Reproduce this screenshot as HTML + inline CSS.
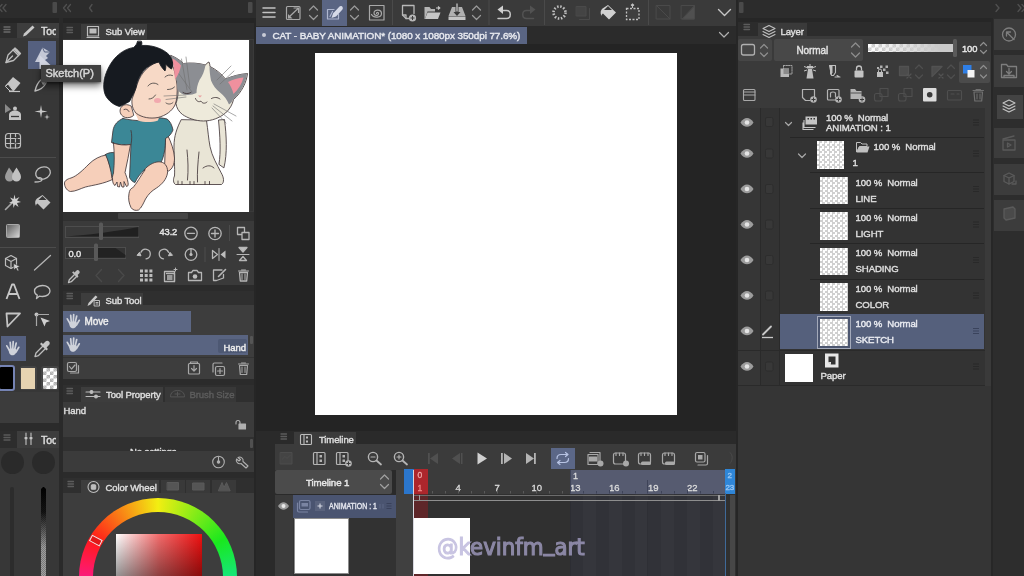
<!DOCTYPE html>
<html lang="en"><head><meta charset="utf-8"><title>CAT - BABY ANIMATION</title>
<style>
html,body{margin:0;padding:0}
body{width:1024px;height:576px;overflow:hidden;background:#2b2b2b;font-family:"Liberation Sans",sans-serif;color:#dcdcdc}
#app{filter:blur(.6px);position:relative;width:1024px;height:576px;overflow:hidden;background:#2b2b2b}
#app div,#app svg,#app span{position:absolute;box-sizing:border-box}
.t{white-space:nowrap;line-height:1;font-weight:normal;color:#dedede;font-size:9.5px;-webkit-text-stroke:.42px currentColor;letter-spacing:-.1px}
svg{overflow:visible}
.ic{fill:none;stroke:#bdbdbd;stroke-width:1.3;stroke-linecap:round;stroke-linejoin:round}
.fl{fill:#bdbdbd;stroke:none}
.dim{opacity:.35}
.chk{background-color:#fff;background-image:linear-gradient(45deg,#cdcdcd 25%,transparent 25%,transparent 75%,#cdcdcd 75%),linear-gradient(45deg,#cdcdcd 25%,transparent 25%,transparent 75%,#cdcdcd 75%);background-size:6px 6px;background-position:0 0,3px 3px}
.rn{font-size:9.5px;color:#dcdcdc;-webkit-text-stroke:.3px currentColor}
.chk2{background:conic-gradient(#d0d0d0 25%,#fff 0 50%,#d0d0d0 0 75%,#fff 0) 0 0/5px 5px}
</style></head><body>
<div id="app">
<!-- topbar -->
<div style="left:0;top:0;width:256px;height:18px;background:#2c2c2c"></div>
<div style="left:0;top:17.500px;width:256px;height:5.500px;background:#252525"></div>
<div style="left:737px;top:0;width:287px;height:17.500px;background:#2c2c2c"></div>
<div style="left:737px;top:17.500px;width:287px;height:5px;background:#262626"></div>
<svg style="left:0;top:0" width="1024" height="18" viewBox="0 0 1024 18">
<g fill="none" stroke="#505050" stroke-width="1.3" stroke-linecap="round" stroke-linejoin="round">
<path d="M2 4.5 -1 8 2 11.5M6 4.5 3 8 6 11.5"/>
<path d="M66.5 4.5 63.5 8 66.5 11.5M70.5 4.5 67.5 8 70.5 11.5"/>
<path d="M92 4.5 89.5 8 92 11.5"/>
<path d="M996 4.5 999 8 996 11.5"/>
<path d="M1018 4.5 1021 8 1018 11.5M1022 4.5 1025 8 1022 11.5"/>
</g>
<rect x="52.5" y="2" width="4.5" height="11" rx="1" fill="#4a4a4a"/>
<rect x="248" y="2" width="4.5" height="11" rx="1" fill="#4a4a4a"/>
<rect x="739" y="2" width="4.5" height="11" rx="1" fill="#4a4a4a"/>
</svg>

<!-- tools -->
<div style="left:0;top:23px;width:59px;height:400px;background:#373737"></div>
<div style="left:0;top:23px;width:17px;height:15px;background:#2d2d2d"></div>
<div style="left:17px;top:23px;width:42px;height:15px;background:#3d3d3d"></div>
<div style="left:0;top:392px;width:59px;height:31px;background:#3c3c3c"></div>
<div style="left:59px;top:18px;width:3.5px;height:558px;background:#2a2a2a"></div>
<div class="t" style="left:41px;top:26px;font-size:10.5px;width:15px;overflow:hidden">Tool</div>
<div style="left:28px;top:41px;width:28px;height:28px;background:#55607f"></div>
<div style="left:1px;top:336px;width:25px;height:24.5px;background:#55607f"></div>
<div style="left:0;top:157px;width:56px;height:1px;background:#4c4c4c"></div>
<div style="left:0;top:246.5px;width:56px;height:1px;background:#4c4c4c"></div>
<!-- swatches -->
<div style="left:-2px;top:365px;width:17px;height:26px;background:#000;border:2px solid #7583b3;border-radius:3px"></div>
<div style="left:19.5px;top:366px;width:17px;height:24px;background:#444;border-radius:3px"></div>
<div style="left:21px;top:368px;width:14px;height:20.5px;background:#e6d3b1"></div>
<div style="left:41px;top:366px;width:18px;height:24px;background:#444;border-radius:3px"></div>
<div style="left:43px;top:368px;width:14px;height:21px;background-color:#fff;background-image:linear-gradient(45deg,#b4b4b4 25%,transparent 25%,transparent 75%,#b4b4b4 75%),linear-gradient(45deg,#b4b4b4 25%,transparent 25%,transparent 75%,#b4b4b4 75%);background-size:7px 7px;background-position:0 0,3.500px 3.500px;border-radius:1px"></div>
<svg style="left:0;top:0" width="60" height="440" viewBox="0 0 60 440">
<g class="ic" style="stroke:#6a6a6a"><path d="M4 27h6M4 29.5h6M4 32h6"/></g>
<!-- pencil tab icon -->
<path d="M23 36.5 24 33.5 32.5 25.5 34.5 27.5 26 35.5z" fill="#c9c9c9"/>
<!-- pen nib -->
<g class="ic"><path d="M6 62.5 8 55 15 48 20.5 53.500 13.5 60.5z"/><path d="M6 62.5 12.500 56"/><path d="M13 50 18.5 55.500"/></g>
<path d="M15 48 17.500 49.500 20.500 53.500 19 55 13.500 49.500z" fill="#bdbdbd"/>
<!-- sketch pencil (selected) -->
<path d="M35 62 42.500 47.500 50 52 46 56 48 58 42 62z" fill="#c4c8d6"/>
<path d="M39.500 69 39.500 55 50.500 65 44.500 65.500 42 69z" fill="#d3d6e2"/>
<path d="M42.500 47.500 44.500 52 50 52" fill="none" stroke="#55607f" stroke-width="1"/>
<!-- eraser -->
<path d="M5 86 13 77 20.500 83 13.500 91.500 10 91.500z" fill="#c4c4c4"/>
<path d="M5.500 86.500 10 91 13.500 91 8 84z" fill="#373737" stroke="#c4c4c4" stroke-width="1"/>
<path d="M9 91.500h11" stroke="#c4c4c4" stroke-width="1.200" fill="none"/>
<!-- brush -->
<g class="ic"><path d="M35 91c1-5 3-9 7-12 3-1 5 1 4 4-2 4-6 7-11 8z"/></g>
<path d="M40.500 80.500c2-2 5-2 5.500 0 0 2-1.500 3.500-3 4.500z" fill="#bdbdbd"/>
<!-- airbrush -->
<path d="M5 104 11 109.500 5 113z" fill="#8a8a8a"/>
<circle cx="15" cy="108.500" r="2" fill="#c4c4c4"/>
<path d="M9 120v-5c0-3 3-4.500 6-4.500s6 1.500 6 4.500v5z" fill="#c4c4c4"/>
<path d="M11 116.500h8" stroke="#373737" stroke-width="1.300"/>
<!-- sparkle -->
<path d="M41 105 42 110.500 47.500 111.500 42 112.500 41 118 40 112.500 34.500 111.500 40 110.500z" fill="#c9c9c9"/>
<path d="M47 114 47.600 116.400 50 117 47.600 117.600 47 120 46.400 117.600 44 117 46.400 116.400z" fill="#c9c9c9"/>
<!-- grid -->
<g class="ic" style="stroke-width:1.200"><rect x="5.500" y="133.500" width="15" height="14.500" rx="3"/><path d="M10.500 133.500v14.500M15.500 133.500v14.500M5.500 138.500h15M5.500 143.500h15"/></g>
<path d="M11.500 137.500h5.500v5.500h-3" fill="none" stroke="#373737" stroke-width="1.200"/>
<!-- blend drops -->
<path d="M9 167.500c3 4 5 6.500 5 9.500 0 2.500-2 4.500-4.500 4.500S5 179.500 5 177c0-3 2-5.500 4-9.500z" fill="#9c9c9c"/>
<path d="M16.500 167.500c2.500 4 4.500 6.500 4.500 9.500 0 2.500-2 4.500-4.500 4.500S12 179.500 12 177c0-3 2-5.500 4.500-9.500z" fill="#c2c2c2"/>
<!-- lasso -->
<g class="ic"><ellipse cx="43" cy="173" rx="7.500" ry="6" transform="rotate(-20 43 173)"/><path d="M38 178c2-1 4 0 4 1.500s-3 2.500-7 2.500"/></g>
<!-- wand -->
<path d="M5.500 209.500 13 202" stroke="#a8a8a8" stroke-width="1.600" stroke-linecap="round"/>
<path d="M14.500 194.500 15.500 199 19.500 197 17 200.500 21 202 17 203 18.500 207 15 204.500 13.500 208 13 203.500 9 203 12.500 201 10 197.500 13.500 199z" fill="#d0d0d0"/>
<!-- bucket -->
<path d="M36 206c-1.500-3-1-6 1-7.500L42.500 195 50.500 202.500 43.500 209.500 37.500 203.500c-1 0.500-1.500 1.500-1.500 2.500z" fill="#c4c4c4"/>
<path d="M38.500 200 42.500 196 46.500 200z" fill="#373737"/>
<!-- gradient -->
<defs><linearGradient id="gr1" x1="0" y1="0" x2="1" y2="1"><stop offset="0" stop-color="#5a5a5a"/><stop offset="1" stop-color="#d8d8d8"/></linearGradient></defs>
<rect x="6.500" y="224.500" width="13" height="13" rx="1" fill="url(#gr1)" stroke="#a8a8a8" stroke-width="1"/>
<!-- 3D object -->
<g class="ic" style="stroke-width:1.200"><path d="M11 255.500 16.500 258.500v7L11 268.500 5.500 265.500v-7z"/><path d="M5.500 258.500 11 261.500 16.500 258.500M11 261.500v7"/></g>
<path d="M13.500 263.500 20 266.500 17.500 267.500 19 270.500 17.500 271 16 268 14 270z" fill="#d4d4d4" stroke="#373737" stroke-width=".6"/>
<!-- line -->
<path d="M34.500 270 50.500 255.500" stroke="#b4b4b4" stroke-width="1.300" stroke-linecap="round"/>
<!-- text A -->
<path d="M6.500 299 12 284.500h2L19.500 299M9 294h8" fill="none" stroke="#c8c8c8" stroke-width="1.800" stroke-linejoin="round"/>
<!-- balloon -->
<g class="ic"><path d="M42.500 285.500c4.500 0 7.500 2.500 7.500 5.500s-3 5.500-7.500 5.500c-1 0-2-.1-3-.4L36.500 298.500l.8-3.300C35.300 294.200 34.500 292.700 34.500 291c0-3 3.500-5.500 8-5.500z"/></g>
<!-- ruler triangle -->
<path d="M6.500 313.500h13.500L7.500 326.500z" fill="none" stroke="#c4c4c4" stroke-width="1.800" stroke-linejoin="round"/>
<!-- object pointer -->
<circle cx="36.500" cy="314.500" r="2" fill="#c4c4c4"/><path d="M36.500 315v11M37 314.500h12" stroke="#a8a8a8" stroke-width="1.200" fill="none"/>
<path d="M40.500 317.500 50 321 46 322.500 44.500 326.500z" fill="#d0d0d0"/>
<!-- hand -->
<g id="hand"><path d="M9.500 350.500 6.800 345.800M10.800 349 10.200 342.300M12.800 348.500 13.200 341.600M14.800 349 16.200 343M16 352 18.800 347.300" fill="none" stroke="#cfd2da" stroke-width="1.700" stroke-linecap="round"/><path d="M8.800 349.500c0-1 7-1.500 7.500 0 .5 3-1 5.800-3.800 5.800s-4-3-3.700-5.800z" fill="#cfd2da"/></g>
<!-- eyedropper -->
<g class="ic"><path d="M35 356.500l1-3.500 7.500-7.500 2.500 2.500-7.500 7.500z"/></g>
<path d="M43 344 45.500 341.500c1-1 2.500-1 3.500 0s1 2.500 0 3.500L46.500 347.500 48 349 46.500 350.500 40 344 41.500 342.500z" fill="#c4c4c4"/>
</svg>
<!-- second tool palette -->
<div style="left:0;top:431px;width:59px;height:145px;background:#373737"></div>
<div style="left:0;top:431px;width:17px;height:17px;background:#2d2d2d"></div>
<div style="left:17px;top:431px;width:42px;height:17px;background:#3d3d3d"></div>
<div class="t" style="left:41px;top:435px;font-size:10.500px;width:15px;overflow:hidden">Tool</div>
<div style="left:0.500px;top:450.500px;width:23.500px;height:23.500px;border-radius:50%;background:#2a2a2a"></div>
<div style="left:31.500px;top:450.500px;width:23.500px;height:23.500px;border-radius:50%;background:#2a2a2a"></div>
<div style="left:10px;top:487px;width:3.500px;height:90px;background:#2c2c2c;border-radius:2px 2px 0 0"></div>
<div class="chk" style="left:40.500px;top:487px;width:5px;height:90px;background-size:2px 2px;background-position:0 0,1px 1px;border-radius:2px 2px 0 0;background-color:#999"></div>
<div style="left:40.500px;top:487px;width:5px;height:90px;background:linear-gradient(to bottom,#000,rgba(0,0,0,.9) 25px,rgba(40,40,40,.3) 60px,rgba(60,60,60,.3));border-radius:2px 2px 0 0"></div>
<svg style="left:0;top:0" width="60" height="576" viewBox="0 0 60 576">
<g class="ic" style="stroke:#5a5a5a"><path d="M4 435h6M4 437.500h6M4 440h6"/></g>
<g class="ic" style="stroke:#c4c4c4;stroke-width:1.100"><path d="M26 433v3M26 439.500v5M31 433v3M31 439.500v5"/></g>
<circle cx="26" cy="438" r="1.600" fill="#c4c4c4"/><circle cx="31" cy="438" r="1.600" fill="#c4c4c4"/>
</svg>

<!-- subview -->
<div style="left:62.5px;top:23px;width:191px;height:262px;background:#3a3a3a"></div>
<div style="left:62.500px;top:23px;width:191px;height:16px;background:#2d2d2d"></div>
<div style="left:81px;top:23.500px;width:66px;height:16px;background:#3d3d3d"></div>
<div class="t" style="left:105.500px;top:27px;font-size:9.500px">Sub View</div>
<div style="left:62.500px;top:40px;width:186.500px;height:171.500px;background:#fff"></div>
<div style="left:62.500px;top:212px;width:191px;height:8.500px;background:#303030"></div>
<div style="left:118px;top:213px;width:70px;height:6px;background:#444;border-radius:1px"></div>
<div style="left:249.500px;top:40px;width:3px;height:171px;background:#333"></div>
<svg style="left:0;top:0" width="256" height="290" viewBox="0 0 256 290">
<g class="ic" style="stroke:#5c5c5c"><path d="M67 27.500h5.500M67 30h5.500M67 32.500h5.500"/></g>
<g class="ic" style="stroke-width:1.200"><rect x="87.500" y="26.500" width="11" height="9.500"/><path d="M87 37.500h12"/><rect x="89.500" y="28.500" width="7" height="5" fill="#bdbdbd" stroke="none"/></g>
<!-- illustration -->
<g stroke="#43383a" stroke-width=".85" stroke-linejoin="round" stroke-linecap="round">
<!-- cat tail -->
<path d="M219 164c2-12 1-28-.5-44l6-.5c2 16 3 34-.5 48z" fill="#e9e5d6"/>
<!-- cat body -->
<path d="M181 120c-4 8-7 16-7 26 0 12 1 22 .5 30-1.500 3-1.500 7 1 8.500h46c3-2 2.500-7-.5-12-4-8-9-16-11-26-1.500-8-2-16-3.500-26z" fill="#e9e5d6"/>
<path d="M187 150c1 10 1.500 20 .5 30M199 152c-1 10-2 20-1.500 30M203 168c4-3 8-3 11 0" fill="none"/>
<path d="M178 181v3M182 181.500v3M190 181.500v3M194 181.500v3M205 181.500v3M209.500 181.500v3" fill="none"/>
<!-- baby right arm behind -->
<path d="M168 136c3 6 6 14 6.500 22 0 6-2 11-6 13l-4-2 1-30z" fill="#f6cfba"/>
<!-- left leg -->
<path d="M106 155c-6 1-12 4-17 9-6 6-12 12-18 14-4 1-7 3-6.500 6 .5 4 3 7 6 7.500 5 0 10-3 15-4.500 8-2 18-3 28-8z" fill="#f6cfba"/>
<!-- shorts left -->
<path d="M105.500 154.500c3-2 7-2.500 10.500-1.500l2 24c-2 1.500-4 2-6 1.500-1-8-3-17-6.500-24z" fill="#3b8796"/>
<!-- shirt body -->
<path d="M123 118.500c-5 2-9 6-10 12l-1.500 12c6 2.500 13 3 19.500 2l-1.500 33c1.500 3 3.500 4.500 5.500 5 4-9 12-17 26-20 3-6 4.500-14 4.500-24 4-2 6-5 7.500-8.500-1-5-3-9-6-11-4-1-8-1.500-12-1-6 3.500-18 3.500-32 .5z" fill="#3b8796"/>
<path d="M131 144.500c1-5 1-10 0-14" fill="none"/>
<!-- left arm -->
<path d="M113.500 143c1 10 1 20 0 30-.5 2-1.500 4-1 6 0 3 1 6 2.500 6.500l2-3.500.5 4.500 2 .5 1-5 1.500 5 2 0 0-5.500 2.500 5c1.500 0 2-2 1.500-4-.5-4-2-7-3-10 2-9 4-19 5.500-28-6 1-12 .5-17.500-1.500z" fill="#f6cfba"/>
<!-- right leg -->
<path d="M144 170c5-6 12-9 17-8 5 1 7 6 6.500 11-1 6-5 11-11 15-5 3-8 6-11 11-2 4-4 9-7 11-3 1-6 0-7.500-2.500-2-4-3-9-2-14 .5-3 1.500-5 3.500-5.500 4-4 8-12 12.500-18z" fill="#f6cfba"/>
<!-- ear -->
<path d="M131 106c-4-2.500-9-1.500-10.500 2.500-1.500 4 1 8 5 9 3 .5 6 0 8-2z" fill="#f6cfba"/>
<path d="M124 109.500c2-1 4 0 5 2" fill="none"/>
<path d="M134 112c2 3 4 6 4 8.500 6 2 14 2 20 0 .5-2 1-3 2-4z" fill="#f6cfba" stroke="none"/>
<!-- face -->
<path d="M136 88c3-12 10-22 22-26 6-1 11 0 14.500 3 2 5 3.500 12 4.500 20 .5 8 0 15-2 20-3 6-9 10.500-17 12.500-8 1.500-16 0-21.500-4-4-4-5-9-4.500-14z" fill="#f7d9c6"/>
<!-- hair -->
<path d="M137.500 41.500c-.5 2.500-2 4.500-4 6-6 1-12 4-17 9-6 6-10 14-12 22-1.500 8-1 15 3 20 3 4 8 7 12 8 3-1 6-3 10-5 2-4 5-9 6.500-14 1.500-8 5-15 11-20 4-3 8-5 12-5.500 1 3 3 6 6 9 1-2.500 1-5 .5-7 2 2 4 4 6 5 1.500-3 2-6 1-9-2-5-7-9-13-11.500-6-2.500-12-3.500-18-3 .5-1.500 .5-3-0-4z" fill="#161a20" stroke="#161a20"/>
<!-- cat head -->
<path d="M171 55.500c4 1.500 9 4.500 12.500 8 7-1 15-.5 22 1.500 1-1.500 2-2.500 3.500-3 .5 1.500 1 3 1 4.500 6 3 11 7 15.500 12.500 7-3 15-5 22-5.500-1 9-6 19-14 26-1 5-4 10-8 13.500-6 5-14 8-22 8-8 0-16-3-21-6.500-4-3-6-7-6.500-11 2-5 2.500-12 2-20-1-9-3-18-7-28z" fill="#eeeadb"/>
<!-- gray patches -->
<path d="M171 55.500c4 1.500 9 4.500 12.500 8 7-1 15-.5 22 1.500-1 6-3 11-6 15-2 4-3 9-3 13-4 2-9 2.500-13 1.500-3-1-5-3-6-5.500-.5-2-.5-4-.5-6-1-9-2-18-6-27.500z" fill="#8c8e93" stroke="none"/>
<path d="M209.500 66.500c6 3 11 7 15.500 12.500 7-3 15-5 22-5.500-1 9-6 19-14 26-1 2-2 4-4 5-2-5-5-9-9-12-4-3-7-7-9-12-1-5-1.500-10-1.500-14z" fill="#8c8e93" stroke="none"/>
<!-- ears inner -->
<path d="M172.500 58.500c3 1.500 6 4 8.500 7-1 5-3 10-6 14-.5-7-1.500-14-2.500-21z" fill="#f0909e" stroke="none"/>
<path d="M228 82c5-2.500 10-4 15.500-4.500-1.500 6-5 12-10 16.500-1-4.500-3-8.500-5.500-12z" fill="#f0909e" stroke="none"/>
<!-- cat face details -->
<path d="M183 92.500c2 1.500 5.500 1.500 8 0M211.500 98.500c2.500-1.500 6-1.500 8.500.5" fill="none" stroke-width=".9"/>
<path d="M195.500 98.500c1 3 3.500 4 5.500 2.500 1 2.500 4 3 6 1" fill="none"/>
<path d="M198 95.500h4l-2 2z" fill="#e8a0a0" stroke="none"/>
</g>
<!-- whiskers -->
<g stroke="#6f6f6f" stroke-width=".6" fill="none" stroke-linecap="round">
<path d="M190 88 186 57M187 90 181.500 59M192 92 179 74M186 95 164 96M186 97 166 99.500"/>
<path d="M214 104 236 116M213 106 232 121M212 108 226 123M217 80 231 66M220 84 234 71"/>
</g>
<!-- baby face details -->
<g stroke="#3b3a3a" stroke-width=".8" fill="none" stroke-linecap="round">
<path d="M148 86c2-3 6.500-4 10-1.500M165 77c2-2 5-2.500 7.500-1.500"/>
<path d="M149 99c2.500 0 5-1.500 6.500-4M167.500 89.500c2.500 0 5-.5 7-2.500"/>
<path d="M166 103c2 1.500 5 1.500 7-.5"/>
</g>
<ellipse cx="157.500" cy="100.500" rx="3.500" ry="2.500" fill="#f09ca8" opacity=".8"/>
</svg>
<!-- subview controls -->
<div style="left:65px;top:226px;width:74px;height:11.500px;border:1px solid #4d4d4d;background:#3a3a3a"></div>
<div style="left:65px;top:247px;width:61px;height:11.500px;border:1px solid #4d4d4d;background:#333"></div>
<div class="t" style="left:159.500px;top:228.300px;font-size:9.300px;color:#e4e4e4">43.2</div>
<div class="t" style="left:68.500px;top:249.600px;font-size:9.300px;color:#e4e4e4">0.0</div>
<svg style="left:0;top:0" width="256" height="290" viewBox="0 0 256 290">
<path d="M66 236.500h72.500v-9.500c-20 4-50 8-72.500 9.500z" fill="#202020"/>
<path d="M98 257.500h27.500V255l-10-7H98z" fill="#222"/>
<rect x="99" y="222.500" width="4" height="17.500" rx="1.500" fill="#595959"/>
<rect x="94" y="243.500" width="4" height="17.500" rx="1.500" fill="#595959"/>
<g class="ic" style="stroke:#b6b6b6">
<circle cx="191" cy="233.300" r="6.200"/><path d="M187.500 233.300h7"/>
<circle cx="215" cy="233.500" r="6.200"/><path d="M211.500 233.500h7M215 230v7"/>
<rect x="237.500" y="227.500" width="7" height="7"/><rect x="242" y="232.500" width="7" height="7" fill="#3a3a3a"/>
<path d="M146 258.800a4.800 4.800 0 1 0-5-6.500"/>
<path d="M163.500 258.800a4.800 4.800 0 1 1 5-6.500"/>
<circle cx="191" cy="254.500" r="5.800"/><path d="M191 249v5"/>
<path d="M212.500 250.500v8l5-4z"/><path d="M219 248.500v12" stroke-width="1"/>
<path d="M239 247.500h8l-4 4.500z" fill="#bdbdbd"/><path d="M237 254.500h12" stroke-width="1"/><path d="M239.500 260.500h7l-3.500-4z"/>
<path d="M164.500 271.500h10v10h-10z"/><path d="M166.500 273.500h8v8"/><path d="M174 269.500l3 0m-1.500-1.500v3" stroke-width="1"/>
<path d="M188.500 272.500h3l1.500-2h4l1.500 2h3v8h-13z"/>
<path d="M222 270h-8.500v10.500h3l7-2.500v-3.500"/><path d="M218.500 276.500 225.500 269.500" stroke-width="1.600"/>
<path d="M239.500 272.500h8l-.8 8.500h-6.400z"/><path d="M238.500 271h10M241.500 270h4M242 274v5.500M245 274v5.500" stroke-width="1"/>
</g>
<path d="M229.500 225v16M205 247v15" stroke="#4c4c4c" stroke-width="1"/>
<path d="M137 255.300 139.500 252.300l1.500 3.500z" fill="#bdbdbd" stroke="#bdbdbd" stroke-width="1"/>
<path d="M172.500 255.300 170 252.300l-1.500 3.500z" fill="#bdbdbd" stroke="#bdbdbd" stroke-width="1"/>
<circle cx="191" cy="254.500" r="1.600" fill="#bdbdbd"/>
<path d="M225.500 250.500v8l-5-4z" fill="#bdbdbd"/>
<circle cx="195" cy="276.500" r="2.300" fill="#bdbdbd"/>
<rect x="167" y="275" width="5.500" height="5" fill="#9a9a9a"/>
<g fill="#bdbdbd"><rect x="140" y="269.500" width="3" height="3"/><rect x="144.700" y="269.500" width="3" height="3"/><rect x="149.400" y="269.500" width="3" height="3"/><rect x="140" y="274" width="3" height="3"/><rect x="144.700" y="274" width="3" height="3"/><rect x="149.400" y="274" width="3" height="3"/><rect x="140" y="278.500" width="3" height="3"/><rect x="144.700" y="278.500" width="3" height="3"/><rect x="149.400" y="278.500" width="3" height="3"/></g>
<!-- eyedropper small -->
<g class="ic"><path d="M68.500 282.500l.8-2.800 6-6 2 2-6 6z"/></g>
<path d="M74.500 272.500 76.300 270.700c.8-.8 2-.8 2.800 0s.8 2 0 2.800L77.300 275.300 78.500 276.500 77.300 277.700 72.100 272.500 73.300 271.300z" fill="#bdbdbd"/>
<path d="M101.500 269.500 96 275.500 101.500 281.500M118.500 269.500 124 275.500 118.500 281.500" fill="none" stroke="#4a4a4a" stroke-width="1.300" stroke-linecap="round" stroke-linejoin="round"/>
</svg>

<!-- subtool -->
<div style="left:62.500px;top:291px;width:191px;height:15px;background:#2f2f2f"></div>
<div style="left:62.500px;top:305px;width:191px;height:74px;background:#3d3d3d"></div>
<div style="left:81px;top:293px;width:62px;height:15px;background:#3d3d3d"></div>
<div class="t" style="left:105.500px;top:296px;font-size:9.500px">Sub Tool</div>
<div style="left:62.500px;top:311px;width:128px;height:21px;background:#5c6784"></div>
<div style="left:62.500px;top:334.500px;width:185.500px;height:20px;background:#596481"></div>
<div style="left:62.500px;top:356.500px;width:191px;height:1px;background:#333"></div>
<div style="left:218px;top:339px;width:28.500px;height:13.500px;background:#4d5873;border-radius:2px"></div>
<div class="t" style="left:223.500px;top:343px;font-size:9.500px;color:#eee">Hand</div>
<div class="t" style="left:84.500px;top:316.500px;font-size:10px;color:#eee">Move</div>
<div style="left:250px;top:336px;width:3px;height:8px;background:#555;border-radius:1px"></div>
<svg style="left:0;top:0" width="256" height="400" viewBox="0 0 256 400">
<g class="ic" style="stroke:#5c5c5c"><path d="M67 293.500h5.500M67 296h5.500M67 298.500h5.500"/></g>
<path d="M87.500 306 88.500 303 95.500 295.500 97.500 297 90.500 304.500z" fill="#c9c9c9"/>
<g class="ic" style="stroke-width:1"><path d="M94.500 300.500h5v5.500h-5zM96 302.500h2M96 304h2"/></g>
<use href="#hand" transform="translate(60.500 -27)"/>
<use href="#hand" transform="translate(60.500 -3.500)"/>
<g class="ic" style="stroke:#a8a8a8;stroke-width:1.200">
<rect x="67.500" y="362.500" width="9" height="9" rx="1.500"/><path d="M78.500 365.500v7.500h-8"/><path d="M69.500 366.500l2 2.500 3.500-4"/>
<rect x="188.500" y="363.500" width="11" height="10.500" rx="1"/><path d="M194 365.500v5M191.500 368.500l2.500 2.500 2.500-2.500M190.500 363.500v-1.500h7v1.500"/>
<rect x="215.500" y="366.500" width="9" height="9" rx="1.500"/><path d="M213 372v-7.500c0-1 .5-1.500 1.500-1.500h7.500"/><path d="M220 368.500v5M217.500 371h5"/>
<path d="M239.500 365.500h8l-.8 9h-6.400z"/><path d="M238.500 364h10M241.500 363h4M242 367v5.500M245 367v5.500" stroke-width="1"/>
</g>
</svg>

<!-- toolprop -->
<div style="left:62.500px;top:385px;width:191px;height:17px;background:#2f2f2f"></div>
<div style="left:81px;top:386.500px;width:81.500px;height:16px;background:#3d3d3d"></div>
<div style="left:164.500px;top:387px;width:71px;height:15px;background:#383838"></div>
<div style="left:62.500px;top:402px;width:191px;height:35px;background:#3b3b3b"></div>
<div style="left:62.500px;top:437px;width:191px;height:14px;background:#303030"></div>
<div style="left:62.500px;top:451px;width:191px;height:21px;background:#3b3b3b"></div>
<div class="t" style="left:106px;top:390px;font-size:9.500px">Tool Property</div>
<div class="t" style="left:189.500px;top:390px;font-size:9.500px;color:#5c5c5c">Brush Size</div>
<div class="t" style="left:63.500px;top:406px;font-size:9.500px">Hand</div>
<div style="left:62.500px;top:437px;width:191px;height:14px;overflow:hidden"><div class="t" style="left:67.500px;top:9.500px;font-size:9.500px">No settings</div></div>
<div style="left:250px;top:439px;width:3px;height:9px;background:#505050;border-radius:1px"></div>
<svg style="left:0;top:0" width="256" height="480" viewBox="0 0 256 480">
<g class="ic" style="stroke:#5c5c5c"><path d="M67 388.500h5.500M67 391h5.500M67 393.500h5.500"/></g>
<g class="ic" style="stroke-width:1.100"><path d="M86 392h14M86 396.500h14"/><circle cx="91.500" cy="392" r="1.400" fill="#bdbdbd"/><circle cx="96" cy="396.500" r="1.400" fill="#bdbdbd"/></g>
<g class="ic" style="stroke:#555;stroke-width:1"><path d="M170.500 396.500c0-4 3-6 7-6s7 2 7 6z"/><path d="M175 394h5M177.500 392v4"/></g>
<g class="ic" style="stroke:#b0b0b0;stroke-width:1.100"><rect x="239" y="424" width="6.500" height="5" fill="#b0b0b0"/><path d="M236 424v-1.500a2 2 0 0 1 4 0V424"/></g>
<g class="ic" style="stroke:#b0b0b0;stroke-width:1.100"><circle cx="218.500" cy="462" r="5.800"/><path d="M218.500 457v5"/><circle cx="218.500" cy="462" r="1.200" fill="#b0b0b0"/>
<path d="M238 457.500a3.500 3.500 0 0 1 5 4l5 4.500-2 2-5-4.500a3.500 3.500 0 0 1-4.500-4.500l2.500 2 1.500-1.500z"/></g>
</svg>

<!-- color -->
<div style="left:62.500px;top:478px;width:191px;height:15px;background:#2f2f2f"></div>
<div style="left:62.500px;top:492.500px;width:191px;height:84px;background:#3d3d3d"></div>
<div style="left:81px;top:479.500px;width:78px;height:14px;background:#3d3d3d"></div>
<div style="left:160.500px;top:480px;width:24px;height:12.500px;background:#393939"></div>
<div style="left:186px;top:480px;width:24px;height:12.500px;background:#393939"></div>
<div style="left:212px;top:480px;width:24px;height:12.500px;background:#393939"></div>
<div class="t" style="left:105.500px;top:483px;font-size:9.500px">Color Wheel</div>
<div style="left:79px;top:497.500px;width:158px;height:158px;border-radius:50%;background:conic-gradient(from -60deg,#ff1a1a,#f2ee12 60deg,#19e81e 120deg,#14e6d8 180deg,#1b3cf0 240deg,#e81ae0 300deg,#ff1a5a 340deg,#ff1a1a)"></div>
<div style="left:93px;top:511.500px;width:130px;height:130px;border-radius:50%;background:#3d3d3d"></div>
<div style="left:116px;top:534px;width:85.500px;height:60px;background:linear-gradient(to bottom,rgba(0,0,0,0),rgba(0,0,0,.42) 42px,#000 85px),linear-gradient(to right,#fff,#f36c6c 50%,#ee1010)"></div>
<div style="left:90px;top:537px;width:11.500px;height:6.500px;border:1px solid #f0e8e8;background:#e01818;transform:rotate(28deg)"></div>
<svg style="left:0;top:0" width="256" height="576" viewBox="0 0 256 576">
<g class="ic" style="stroke:#5c5c5c"><path d="M68 481.500h5.500M68 484h5.500M68 486.500h5.500"/></g>
<g class="ic" style="stroke-width:1.100"><circle cx="93.500" cy="487" r="5.500"/><rect x="91.300" y="484.800" width="4.400" height="4.400" rx="1" fill="#bdbdbd"/></g>
<g class="ic" style="stroke:#5a5a5a;stroke-width:1"><rect x="167.500" y="482.500" width="11" height="7.500" fill="#555"/><rect x="193" y="483" width="11" height="7" fill="#555"/><path d="M218.500 490.500l3.500-8 2 5 2.500-5 3.500 8z" fill="#555"/></g>
</svg>

<!-- center -->
<div style="left:256px;top:0;width:479.500px;height:25.500px;background:#3a3a3a"></div>
<div style="left:256px;top:25.500px;width:479.500px;height:18px;background:#2b2b2b"></div>
<div style="left:256px;top:43.500px;width:479.500px;height:387px;background:#242424"></div>
<div style="left:253.500px;top:18px;width:2.500px;height:558px;background:#262626"></div>
<div style="left:735.500px;top:0;width:2px;height:576px;background:#262626"></div>
<div style="left:322px;top:0;width:24.500px;height:25.500px;background:#5a6583"></div>
<div style="left:256px;top:27px;width:270.500px;height:16.500px;background:#5a6583"></div>
<div class="t" id="doctitle" style="left:272.500px;top:30.500px;font-size:9.950px;color:#e6e8ee;letter-spacing:-.1px">CAT - BABY ANIMATION* (1080 x 1080px 350dpi 77.6%)</div>
<div style="left:261.500px;top:32.500px;width:4px;height:4px;border-radius:50%;background:#c8cbd6"></div>
<div style="left:315px;top:52.500px;width:362px;height:362.500px;background:#fff"></div>
<svg style="left:0;top:0" width="740" height="44" viewBox="0 0 740 44">
<path d="M392.500 0v25M489 0v25M544.500 0v25M648.500 0v25" stroke="#4a4a4a" stroke-width="1"/>
<g class="ic" style="stroke:#c2c2c2;stroke-width:1.500"><path d="M263 8h12M263 12.500h12M263 17h12"/></g>
<!-- zoom-fit icon -->
<g class="ic" style="stroke:#a8a8a8;stroke-width:1.200"><rect x="286.500" y="6.500" width="13.500" height="13" rx="1"/><path d="M288.500 17.500 298 8.500M294 8h4.500v4.500"/></g>
<path d="M288 18.500 288 14 292.500 18.500z" fill="#a8a8a8"/>
<g class="ic" style="stroke:#9a9a9a;stroke-width:1.200"><path d="M309.500 10 313.500 6 317.500 10M309.500 15.500 313.500 19.500 317.500 15.500"/><path d="M350.500 10 354.500 6 358.500 10M350.500 15.500 354.500 19.500 358.500 15.500"/><path d="M472.500 10 476.500 6 480.500 10M472.500 15.500 476.500 19.500 480.500 15.500"/></g>
<!-- selected: edit layer icon -->
<g class="ic" style="stroke:#aeb6cf;stroke-width:1.200"><path d="M334 9.500h-6.500v9.500h11v-5"/><path d="M330 16.500l2.500-5M334 13v3"/></g>
<path d="M331.500 18 333 13.500 339.500 6.500c1-1 2.500-.5 3 .5s.5 2-.5 3L336 16.500z" fill="#d6dae8"/>
<!-- spiral -->
<g class="ic" style="stroke:#a8a8a8;stroke-width:1.200"><rect x="369.500" y="5.500" width="14.500" height="14.500"/><path d="M376.500 13.500c0-1.500 2-1.500 2 0 0 2.500-4.500 2.500-4.500-.5 0-4 7.500-4 7.500.5 0 4.500-8 5-10 1"/></g>
<!-- new doc -->
<g class="ic" style="stroke:#b8b8b8;stroke-width:1.300"><path d="M409 18.500h-3l-3.500-3.500v-9.500h11.500v8"/><path d="M402.500 15h3.500v3.500"/></g>
<circle cx="412.500" cy="18" r="3.600" fill="#b8b8b8"/><path d="M410.500 18h4M412.500 16v4" stroke="#3a3a3a" stroke-width="1"/>
<!-- open folder -->
<path d="M424.500 19v-12h5l1.500 2h4v2.500h-7.500l-2.500 7.500z" fill="#b4b4b4"/><path d="M427.500 12.500h13l-2.500 6.500h-13z" fill="#c6c6c6"/>
<path d="M436 8h3.500M438 6.500l1.800 1.500-1.800 1.500" fill="none" stroke="#c6c6c6" stroke-width="1.100"/>
<!-- save -->
<path d="M448.500 16 452 7h3.500v5h-2l3.500 4 3.500-4h-2V7H462l3.500 9z" fill="#b0b0b0"/>
<rect x="448.500" y="16.500" width="17" height="3.500" fill="#c4c4c4"/>
<path d="M457 3.500v8" stroke="#c4c4c4" stroke-width="1.300"/>
<!-- undo / redo -->
<path d="M498 18.500h8.500c5 0 5-8 0-8h-3.500" fill="none" stroke="#c6c6c6" stroke-width="1.500" stroke-linecap="round"/>
<path d="M497.500 9.500 503 5.500v8.500z" fill="#d0d0d0"/>
<path d="M533.500 18.500h-7c-5 0-5-8 0-8h3.500" fill="none" stroke="#525252" stroke-width="1.500" stroke-linecap="round"/>
<path d="M535.500 9.500 530 5.500v8.500z" fill="#525252"/>
<!-- dashed circle -->
<circle cx="559.500" cy="12.500" r="6" fill="none" stroke="#c2c2c2" stroke-width="2.600" stroke-dasharray="1.500 1.640"/>
<!-- dim copy -->
<g class="ic" style="stroke:#4a4a4a;stroke-width:1"><rect x="576.500" y="6.500" width="9.500" height="9.500" fill="#444"/><path d="M579.500 19.500h10v-11"/></g>
<!-- bucket -->
<path d="M601.500 16c-1.500-3-1-6 1-7.500L608 5 616 12.500 609 19.500 603 13.500c-1 .5-1.500 1.500-1.500 2.500z" fill="#d0d0d0"/>
<path d="M604 10 608 6 612 10z" fill="#3a3a3a"/>
<!-- transform -->
<rect x="626.500" y="8.500" width="12.500" height="11" fill="#3f3f3f" stroke="#c0c0c0" stroke-width="1.300" stroke-dasharray="2 1.500"/>
<path d="M632.500 8V4M631 5.500l1.500-1.500 1.500 1.500" stroke="#c0c0c0" stroke-width="1.100" fill="none"/>
<!-- dim icons -->
<g class="ic" style="stroke:#4a4a4a;stroke-width:1"><rect x="656.500" y="5.500" width="13.500" height="13.500"/><path d="M656.500 5.500 670 19"/><rect x="681.500" y="5.500" width="13" height="13.500"/><path d="M694.500 6v13h-12z" fill="#505050"/></g>
<g class="ic" style="stroke:#c6c6c6;stroke-width:1.400"><path d="M718.500 9.500 724.500 15.500 730.500 9.500"/></g>
<g class="ic" style="stroke:#b0b0b0;stroke-width:1.200"><path d="M719.500 32.500 724 37 728.500 32.500"/></g>
</svg>

<!-- timeline -->
<div style="left:256px;top:430.500px;width:479.500px;height:146px;background:#2a2a2a"></div>
<div style="left:274.500px;top:443.500px;width:461px;height:26px;background:#3b3b3b"></div>
<div style="left:294px;top:432px;width:62px;height:13px;background:#3b3b3b"></div>
<div class="t" style="left:319px;top:435px;font-size:9.500px">Timeline</div>
<div style="left:274.500px;top:470px;width:117.500px;height:23.500px;background:#4b4b4b;border-radius:2px"></div>
<div class="t" style="left:306px;top:477.500px;font-size:9.700px;color:#e8e8e8">Timeline 1</div>
<div style="left:550.500px;top:448px;width:24.500px;height:21px;background:#5b6787"></div>
<!-- ruler -->
<div style="left:396px;top:470px;width:339.500px;height:23.500px;background:#3b3b3b"></div>
<div style="left:570px;top:470px;width:155px;height:23.500px;background:#565b70"></div>
<!-- track area -->
<div style="left:274.500px;top:494.500px;width:18px;height:82px;background:#3a3a3a"></div>
<div style="left:292.500px;top:494.500px;width:103px;height:82px;background:#323232"></div>
<div style="left:292.500px;top:495px;width:103px;height:22.500px;background:#4a5470"></div>
<div style="left:396px;top:494px;width:339.500px;height:82px;background:#303030"></div>
<div style="left:570px;top:494px;width:155px;height:82px;background:repeating-linear-gradient(to right,#313238 0,#313238 13px,#35363c 13px,#35363c 26px)"></div>
<div style="left:396px;top:470px;width:17.500px;height:106px;background:#404040"></div>
<div style="left:403.500px;top:469px;width:10px;height:24.500px;background:#2b76cc"></div>
<div style="left:414px;top:469px;width:13.500px;height:25px;background:#ad262c"></div>
<div style="left:414px;top:494px;width:13.500px;height:82px;background:#5e2629"></div>
<div style="left:413px;top:469.500px;width:1.200px;height:107px;background:#d8d8e0"></div>
<div style="left:725px;top:469px;width:9.500px;height:24.500px;background:#2f86d8"></div>
<div style="left:724.500px;top:493px;width:1.500px;height:83px;background:#3f6a9a"></div>
<div style="left:730px;top:495px;width:4.500px;height:81px;background:#474747"></div>
<div style="left:414px;top:494.500px;width:310.500px;height:1px;background:#6c6c6c"></div>
<div style="left:414px;top:500px;width:310.500px;height:1.200px;background:#8e8e8e"></div>
<div style="left:419px;top:495px;width:1px;height:5px;background:#a0a0a0"></div>
<div style="left:718px;top:495px;width:1.500px;height:6px;background:#a0a0a0"></div>
<div style="left:414px;top:518px;width:55.500px;height:55.500px;background:#fff"></div>
<div style="left:293.500px;top:518px;width:55.500px;height:56px;background:#fff;border:1.500px solid #8c8c8c"></div>
<div class="t" style="left:329px;top:502px;font-size:9.200px;color:#e4e6ee;transform-origin:0 0;transform:scaleX(.76);letter-spacing:0">ANIMATION : 1</div>
<div class="t rn" style="left:417.500px;top:471px;color:#f0a8a8;font-size:8.500px">0</div>
<div class="t rn" style="left:417.500px;top:483.500px;color:#f08888;font-size:8.500px">1</div>
<div class="t rn" style="left:455.500px;top:483px">4</div>
<div class="t rn" style="left:494.500px;top:483px">7</div>
<div class="t rn" style="left:531.500px;top:483px">10</div>
<div class="t rn" style="left:570px;top:483px">13</div>
<div class="t rn" style="left:609px;top:483px">16</div>
<div class="t rn" style="left:648px;top:483px">19</div>
<div class="t rn" style="left:687px;top:483px">22</div>
<div class="t rn" style="left:573px;top:472px;font-size:9px">1</div>
<div class="t rn" style="left:727.500px;top:472px;font-size:8px;color:#9cc8f4">2</div>
<div class="t rn" style="left:725.500px;top:483.500px;font-size:8px;color:#9cc8f4">23</div>
<svg style="left:0;top:0" width="740" height="576" viewBox="0 0 740 576">
<g class="ic" style="stroke:#5c5c5c"><path d="M281 434h5.500M281 436.500h5.500M281 439h5.500"/></g>
<g class="ic" style="stroke-width:1.100"><rect x="300.500" y="434.500" width="11" height="10" rx="1"/><path d="M304 434.500v10"/><rect x="306" y="436.500" width="2" height="2" fill="#bdbdbd" stroke="none"/><rect x="306" y="440.500" width="2" height="2" fill="#bdbdbd" stroke="none"/></g>
<!-- toolbar icons -->
<g class="ic" style="stroke:#4c4c4c;stroke-width:1"><rect x="280.500" y="452.500" width="11.500" height="11.500" fill="#444"/><path d="M282.500 459l2.500-2.500 2 2 3-3"/></g>
<g class="ic" style="stroke:#b4b4b4;stroke-width:1.200"><rect x="313.500" y="452.500" width="11.500" height="12" rx="1"/><path d="M317 452.500v12"/><rect x="336.500" y="452.500" width="11.500" height="12" rx="1"/><path d="M340 452.500v12"/></g>
<g fill="#b4b4b4"><rect x="319.500" y="455" width="2.500" height="2.500"/><rect x="319.500" y="459.500" width="2.500" height="2.500"/><rect x="342.500" y="455" width="2.500" height="2.500"/><rect x="342.500" y="459.500" width="2.500" height="2.500"/><circle cx="348.500" cy="463.500" r="3.300"/></g>
<path d="M346.500 463.500h4M348.500 461.500v4" stroke="#3b3b3b" stroke-width="1"/>
<g class="ic" style="stroke:#b4b4b4;stroke-width:1.400"><circle cx="373" cy="457" r="4.600"/><path d="M376.500 460.500 381 464.500" stroke-width="1.800"/><path d="M371 457h4" stroke-width="1.100"/><circle cx="399" cy="457" r="4.600"/><path d="M402.500 460.500 407 464.500" stroke-width="1.800"/><path d="M397 457h4M399 455v4" stroke-width="1.100"/></g>
<g fill="#505050"><path d="M438 453v11l-8-5.500z"/><rect x="428" y="453" width="1.800" height="11"/><path d="M460 453v11l-8-5.500z"/><rect x="461" y="453" width="1.500" height="11"/></g>
<path d="M477.500 452.500v12l9.500-6z" fill="#d0d0d0"/>
<g fill="#b4b4b4"><rect x="501" y="453" width="1.800" height="11"/><path d="M504 453v11l8-5.500z"/><path d="M526 453v11l8-5.500z"/><rect x="534" y="453" width="1.800" height="11"/></g>
<g class="ic" style="stroke:#b8c4e4;stroke-width:1.200"><path d="M557 458.500c0-2.500 1.500-4 4-4h6.500M568.500 458.500c0 2.500-1.500 4-4 4H558"/><path d="M565.500 452.500l2.500 2-2.500 2M560 460.500l-2.500 2 2.500 2"/></g>
<g class="ic" style="stroke:#a8a8a8;stroke-width:1.200"><path d="M590 452.500h10v9.500M588 454.500h10v10h-10z"/><rect x="589.500" y="457" width="7" height="4" fill="#a8a8a8"/>
<rect x="613.500" y="453" width="12" height="11" rx="2"/><path d="M616 453v2.500M619.500 453v2.500M623 453v2.500"/>
<rect x="638.500" y="453" width="12" height="11" rx="2"/><path d="M641 453v2.500M644.500 453v2.500M648 453v2.500"/>
<rect x="662.500" y="453" width="12" height="11" rx="2"/><path d="M665 453v2.500M668.500 453v2.500M672 453v2.500"/>
<rect x="695.500" y="452.500" width="9.500" height="9.500" rx="1.500"/><path d="M698 465h8c1 0 1.500-.5 1.500-1.500v-8"/></g>
<g fill="#a8a8a8"><circle cx="600.500" cy="463.500" r="3"/><circle cx="626" cy="463.500" r="3"/><rect x="641" y="461.500" width="10" height="3.500" rx="1.500"/><rect x="665" y="461.500" width="10" height="3.500" rx="1.500"/><rect x="698" y="455" width="4.500" height="4.500"/></g>
<g class="ic" style="stroke:#4a4a4a;stroke-width:1"><path d="M730 452.500c3 2 3 8 0 11"/></g>
<g class="ic" style="stroke:#a0a0a0;stroke-width:1.200"><path d="M380.500 479 384.500 475 388.500 479M380.500 484.500 384.500 488.500 388.500 484.500"/></g>
<!-- eye -->
<path d="M278 506c1.500-2.500 3.500-3.800 5.500-3.800s4 1.300 5.500 3.800c-1.500 2.500-3.500 3.800-5.500 3.800s-4-1.300-5.500-3.800z" fill="#9a9a9a"/><circle cx="283.500" cy="506" r="2" fill="#e8e8e8"/>
<g class="ic" style="stroke:#7a84a2;stroke-width:1.200"><rect x="299.500" y="500.500" width="10.500" height="9" rx="1.500"/><path d="M297.500 503v7.500c0 1 .5 1.500 1.500 1.500h8.500"/><rect x="301.500" y="503" width="6.500" height="3.500" fill="#7a84a2" stroke="none"/></g>
<rect x="315" y="501" width="10" height="10" fill="#59627c"/>
<path d="M317.500 506h5M320 503.500v5" stroke="#d8dae4" stroke-width="1.100"/>
<path d="M386.500 503.500h5M386.500 506h5M386.500 508.500h5" stroke="#39415a" stroke-width="1"/>
<path d="M380 504v4.500M383 504v4.500" stroke="#5c6684" stroke-width="1"/>
<!-- ruler ticks -->
<g stroke="#5a5a5a" stroke-width="1"><path d="M432.500 491v2.500M445.500 491v2.500M458.500 490v3.500M471.500 491v2.500M484.500 491v2.500M497.500 490v3.500M510.500 491v2.500M523.500 491v2.500M536.500 490v3.500M549.500 491v2.500M562.500 491v2.500"/></g>
<g stroke="#3e4358" stroke-width="1"><path d="M570.500 470v23.500M583.500 491v2.500M596.500 491v2.500M609.500 490v3.500M622.500 491v2.500M635.500 491v2.500M647.500 480v13.500M661.500 491v2.500M674.500 491v2.500M687.500 490v3.500M700.500 491v2.500M713.500 491v2.500"/></g>
<path d="M570.500 501.500v75M647.500 501.500v75" stroke="#2a2b31" stroke-width="1" opacity=".6"/>
</svg>

<!-- layer -->
<div style="left:737.500px;top:22px;width:253px;height:15px;background:#2c2c2c"></div>
<div style="left:737.500px;top:35.500px;width:253px;height:541px;background:#3a3a3a"></div>
<div style="left:758px;top:23px;width:49px;height:15px;background:#3a3a3a"></div>
<div class="t" style="left:780.500px;top:27px;font-size:9.500px">Layer</div>
<div style="left:737.500px;top:39px;width:34px;height:21.500px;background:#464646;border-radius:2px"></div>
<div style="left:774px;top:39px;width:89px;height:21.500px;background:#484848;border-radius:2px"></div>
<div class="t" style="left:796.500px;top:45.500px;font-size:10px;color:#e2e2e2">Normal</div>
<div class="chk" style="left:868px;top:44px;width:85px;height:7.500px;background-size:7px 7px;background-position:0 0,3.500px 3.500px;background-color:#fff"></div>
<div style="left:868px;top:44px;width:85px;height:7.500px;background:linear-gradient(to right,rgba(204,204,204,0),rgba(204,204,204,.5) 40%,#cacaca 85%)"></div>
<div style="left:953px;top:39px;width:4px;height:18px;background:#5a5a5a;border-radius:1.500px"></div>
<div class="t" style="left:962px;top:43.800px;font-size:9.400px;color:#e8e8e8">100</div>
<div style="left:959px;top:61px;width:31px;height:21.500px;background:#4b4b4b;border-radius:2px"></div>
<div style="left:737.500px;top:108px;width:247px;height:277.500px;background:#333"></div>
<div style="left:737.500px;top:108px;width:22px;height:277.500px;background:#363636"></div>
<div style="left:759.500px;top:108px;width:1px;height:277.500px;background:#2a2a2a"></div>
<div style="left:779px;top:108px;width:1px;height:277.500px;background:#2a2a2a"></div>
<div style="left:737.500px;top:385px;width:247px;height:1px;background:#2a2a2a"></div>
<div style="left:737.500px;top:386px;width:253px;height:190px;background:#353535"></div>
<div style="left:790px;top:136.500px;width:194px;height:1px;background:#262626"></div>
<div style="left:810px;top:172px;width:174px;height:1px;background:#262626"></div>
<div style="left:810px;top:207.5px;width:174px;height:1px;background:#262626"></div>
<div style="left:810px;top:243px;width:174px;height:1px;background:#262626"></div>
<div style="left:810px;top:278.5px;width:174px;height:1px;background:#262626"></div>
<div style="left:737.500px;top:349.500px;width:247px;height:1px;background:#2a2a2a"></div>
<div style="left:779.500px;top:314.300px;width:204.500px;height:35.200px;background:#55607c"></div>
<div style="left:817px;top:316px;width:33.500px;height:32.500px;border:1.300px solid #a4aaba;background:#4c5670"></div>
<div class="t" style="left:826px;top:112.7px;font-size:9.600px">100 %&nbsp; Normal</div>
<div class="t" style="left:826px;top:123.4px;font-size:9.600px">ANIMATION : 1</div>
<div class="chk2" style="left:816.500px;top:141px;width:27.500px;height:27.500px"></div>
<div class="t" style="left:873.5px;top:142.1px;font-size:9.600px">100 %&nbsp; Normal</div>
<div class="t" style="left:852.5px;top:158px;font-size:9.600px">1</div>
<div class="chk2" style="left:820px;top:176.5px;width:27.500px;height:27.500px"></div>
<div class="t" style="left:855.5px;top:177.7px;font-size:9.600px;color:#dedede">100 %&nbsp; Normal</div>
<div class="t" style="left:855.5px;top:193.9px;font-size:9.600px;color:#dedede">LINE</div>
<div class="chk2" style="left:820px;top:212px;width:27.500px;height:27.500px"></div>
<div class="t" style="left:855.5px;top:213.2px;font-size:9.600px;color:#dedede">100 %&nbsp; Normal</div>
<div class="t" style="left:855.5px;top:229.4px;font-size:9.600px;color:#dedede">LIGHT</div>
<div class="chk2" style="left:820px;top:247.5px;width:27.500px;height:27.500px"></div>
<div class="t" style="left:855.5px;top:247.9px;font-size:9.600px;color:#dedede">100 %&nbsp; Normal</div>
<div class="t" style="left:855.5px;top:264.4px;font-size:9.600px;color:#dedede">SHADING</div>
<div class="chk2" style="left:820px;top:283px;width:27.500px;height:27.500px"></div>
<div class="t" style="left:855.5px;top:283.7px;font-size:9.600px;color:#dedede">100 %&nbsp; Normal</div>
<div class="t" style="left:855.5px;top:300.1px;font-size:9.600px;color:#dedede">COLOR</div>
<div class="chk2" style="left:820px;top:318.5px;width:27.500px;height:27.500px"></div>
<div class="t" style="left:855.5px;top:318.6px;font-size:9.600px;color:#e8eaf0">100 %&nbsp; Normal</div>
<div class="t" style="left:855.5px;top:335.4px;font-size:9.600px;color:#e8eaf0">SKETCH</div>
<div style="left:785px;top:353.500px;width:28px;height:28px;background:#fff"></div>
<div class="t" style="left:820.5px;top:370.9px;font-size:9.600px">Paper</div>
<svg style="left:0;top:0" width="1024" height="400" viewBox="0 0 1024 400">
<g class="ic" style="stroke:#5c5c5c"><path d="M744 24.500h5.500M744 27h5.500M744 29.500h5.500"/></g>
<g class="ic" style="stroke:#c0c0c0;stroke-width:1.100"><path d="M769 25.500l6 3-6 3-6-3z"/><path d="M763 31.500l6 3 6-3M763 34.500l6 3 6-3"/></g>
<g class="ic" style="stroke:#b0b0b0;stroke-width:1.300"><rect x="741.500" y="44.500" width="13" height="10.500" rx="2"/></g>
<g class="ic" style="stroke:#8e8e8e;stroke-width:1.200"><path d="M760.500 48 764 44.500 767.500 48M760.500 53 764 56.500 767.500 53"/><path d="M851.500 47 855.500 43 859.500 47M851.500 53 855.500 57 859.500 53"/><path d="M980.500 45.500 983.500 42.500 986.500 45.500M980.500 50.500 983.500 53.500 986.500 50.500"/><path d="M980.500 68.500 983.500 65.500 986.500 68.500M980.500 75 983.500 78 986.500 75"/></g>
<g class="ic" style="stroke:#4f4f4f;stroke-width:1.200"><path d="M915.500 68.500 919 65 922.500 68.500M915.500 75 919 78.500 922.500 75"/><path d="M947.500 68.500 951 65 954.500 68.500M947.500 75 951 78.500 954.500 75"/></g>
<g class="ic" style="stroke:#a0a0a0;stroke-width:1" stroke-dasharray="1.500 1"><rect x="783.500" y="65.500" width="8.500" height="8.500"/></g>
<rect x="780.500" y="68.500" width="8.500" height="8.500" fill="#b8b8b8"/><rect x="783.500" y="68.500" width="5.500" height="5.500" fill="#8a8a8a"/>
<path d="M808 69h4l1.500 9.500h-7z" fill="#c0c0c0"/><rect x="807" y="66" width="6" height="2.500" fill="#c0c0c0"/><path d="M804 66.500l3 1M816 66.500l-3 1M804 71l3-1M816 71l-3-1M809 65h2" stroke="#c0c0c0" stroke-width="1"/>
<g class="ic" style="stroke:#c0c0c0;stroke-width:1.100"><path d="M829.500 65.500h6v7l-2 3h-2z"/><path d="M835 77h5M837 75.500l2.500 1.500"/></g><path d="M830 66h2.500v6.500l-1 2h-1.500z" fill="#c0c0c0"/>
<rect x="854.500" y="70.500" width="9" height="7" rx="1" fill="#c4c4c4"/><path d="M856.500 70.500v-2a2.500 2.500 0 0 1 5 0v2" fill="none" stroke="#c4c4c4" stroke-width="1.300"/>
<rect x="877" y="72" width="6" height="5" fill="#c0c0c0"/><path d="M878.500 72v-1.500a1.500 1.500 0 0 1 3 0V72" fill="none" stroke="#c0c0c0" stroke-width="1"/><g fill="#b0b0b0"><rect x="880" y="65.500" width="2.500" height="2.500"/><rect x="885.500" y="65.500" width="2.500" height="2.500"/><rect x="883" y="68.500" width="2.500" height="2.500"/><rect x="886" y="71.500" width="2.500" height="2.500"/><rect x="877" y="67" width="2" height="2"/></g>
<g class="ic" style="stroke:#525252;stroke-width:1.300"><rect x="899.500" y="66.500" width="9" height="9" fill="#4c4c4c"/><path d="M907 74l4 4M911 74l-4 4"/><path d="M932 66.500h10l-10 10z" fill="#4c4c4c"/><path d="M939 74l4 4M943 74l-4 4"/></g>
<rect x="963" y="65" width="8.500" height="8.500" fill="#2f7fe6"/><rect x="967.500" y="70" width="7" height="7.500" fill="#f4f4f4"/>
<g class="ic" style="stroke:#a8a8a8;stroke-width:1.100"><rect x="743.500" y="89.500" width="11.500" height="11" rx="1"/><path d="M743.500 95h11.500M743.500 92h11.500" /></g>
<g class="ic" style="stroke:#b4b4b4;stroke-width:1.200"><path d="M810 100.500h-4.500l-3-3v-8h12v7"/><rect x="827.500" y="89.500" width="11.500" height="10.500" rx="1"/><path d="M830.500 97v-3.500c0-2 5-2 5 0V97"/></g>
<circle cx="813.500" cy="99.500" r="3.300" fill="#b4b4b4"/><circle cx="838.500" cy="99.500" r="3.300" fill="#b4b4b4"/><circle cx="862" cy="99.500" r="3.300" fill="#b4b4b4"/>
<path d="M811.500 99.500h4M813.500 97.500v4M836.500 99.500h4M838.500 97.500v4M860 99.500h4M862 97.500v4" stroke="#3a3a3a" stroke-width="1"/>
<path d="M850.500 99v-10h4.500l1.500 2h5v8z" fill="#b4b4b4"/><path d="M850.500 93h11" stroke="#3a3a3a" stroke-width=".8"/>
<g class="ic" style="stroke:#4f4f4f;stroke-width:1.100"><rect x="880" y="88.500" width="8" height="8"/><rect x="874.500" y="93.500" width="7.500" height="7.500" rx="2"/><rect x="904" y="88.500" width="8" height="8"/><rect x="898.500" y="93.500" width="7.500" height="7.500" rx="2"/><rect x="947.500" y="90.500" width="14" height="9.500" rx="1"/><path d="M951 94h3M957 94h2"/></g>
<rect x="923" y="88" width="13.500" height="13.500" rx="1" fill="#dcdcdc"/><circle cx="929.700" cy="94.700" r="2.800" fill="#3a3a3a"/>
<g class="ic" style="stroke:#707070;stroke-width:1.200"><path d="M974 92h8.500l-.8 9h-6.900z"/><path d="M973 90.500h10.500M976 89.500h4.500M977 94v5M980 94v5" stroke-width="1"/></g>
<path d="M740.500 122.5 c1.800-3 4-4.500 6.500-4.500s4.700 1.500 6.500 4.500c-1.800 3-4 4.300-6.500 4.300s-4.700-1.300-6.500-4.300z" fill="#9c9c9c"/><circle cx="747" cy="122.5" r="2.300" fill="#e4e4e4"/>
<path d="M740.500 153.5 c1.800-3 4-4.500 6.500-4.500s4.700 1.500 6.500 4.500c-1.800 3-4 4.300-6.500 4.300s-4.700-1.300-6.500-4.300z" fill="#9c9c9c"/><circle cx="747" cy="153.5" r="2.300" fill="#e4e4e4"/>
<path d="M740.500 189 c1.800-3 4-4.500 6.500-4.500s4.700 1.500 6.500 4.500c-1.800 3-4 4.300-6.500 4.300s-4.700-1.300-6.500-4.300z" fill="#9c9c9c"/><circle cx="747" cy="189" r="2.300" fill="#e4e4e4"/>
<path d="M740.500 224.5 c1.800-3 4-4.500 6.500-4.500s4.700 1.500 6.500 4.500c-1.800 3-4 4.300-6.500 4.300s-4.700-1.300-6.500-4.300z" fill="#9c9c9c"/><circle cx="747" cy="224.5" r="2.300" fill="#e4e4e4"/>
<path d="M740.500 260 c1.800-3 4-4.500 6.500-4.500s4.700 1.500 6.500 4.500c-1.800 3-4 4.300-6.500 4.300s-4.700-1.300-6.500-4.300z" fill="#9c9c9c"/><circle cx="747" cy="260" r="2.300" fill="#e4e4e4"/>
<path d="M740.500 295.5 c1.800-3 4-4.500 6.500-4.500s4.700 1.500 6.500 4.500c-1.800 3-4 4.300-6.500 4.300s-4.700-1.300-6.500-4.300z" fill="#9c9c9c"/><circle cx="747" cy="295.5" r="2.300" fill="#e4e4e4"/>
<path d="M740.500 331 c1.800-3 4-4.500 6.500-4.500s4.700 1.500 6.500 4.500c-1.800 3-4 4.300-6.500 4.300s-4.700-1.300-6.500-4.300z" fill="#9c9c9c"/><circle cx="747" cy="331" r="2.300" fill="#e4e4e4"/>
<path d="M740.500 366.5 c1.800-3 4-4.500 6.500-4.500s4.700 1.500 6.500 4.500c-1.800 3-4 4.300-6.500 4.300s-4.700-1.300-6.500-4.300z" fill="#9c9c9c"/><circle cx="747" cy="366.5" r="2.300" fill="#e4e4e4"/>
<rect x="765.500" y="117.5" width="7.500" height="9" rx="1.500" fill="#383838" stroke="#2c2c2c" stroke-width=".8"/>
<rect x="765.500" y="149" width="7.500" height="9" rx="1.500" fill="#383838" stroke="#2c2c2c" stroke-width=".8"/>
<rect x="765.500" y="184.5" width="7.500" height="9" rx="1.500" fill="#383838" stroke="#2c2c2c" stroke-width=".8"/>
<rect x="765.500" y="220" width="7.500" height="9" rx="1.500" fill="#383838" stroke="#2c2c2c" stroke-width=".8"/>
<rect x="765.500" y="255.5" width="7.500" height="9" rx="1.500" fill="#383838" stroke="#2c2c2c" stroke-width=".8"/>
<rect x="765.500" y="291" width="7.500" height="9" rx="1.500" fill="#383838" stroke="#2c2c2c" stroke-width=".8"/>
<rect x="765.500" y="362" width="7.500" height="9" rx="1.500" fill="#383838" stroke="#2c2c2c" stroke-width=".8"/>
<path d="M762 337.500h11" stroke="#c8c8c8" stroke-width="1.300"/><path d="M763 334.500 771 326.500" stroke="#c8c8c8" stroke-width="1.800" stroke-linecap="round"/>
<g class="ic" style="stroke:#a8a8a8;stroke-width:1.200"><path d="M785.500 122.500 788.500 125.500 791.500 122.500"/><path d="M798.500 154 802 157.500 805.500 154"/></g>
<path d="M805.500 116.500h11.500v8h-11.500z" fill="#c4c4c4"/><path d="M807.500 118h1.500v1.500h-1.500zM810.500 118h1.500v1.500h-1.500zM813.500 118h1.500v1.500h-1.500z" fill="#333"/><path d="M804 120v7.500h11.500M803 122.500v7h10.500" fill="none" stroke="#c4c4c4" stroke-width="1.100"/>
<path d="M856.500 152v-9.500h4l1.500 1.500h5v2.500h-7.500z" fill="none" stroke="#c0c0c0" stroke-width="1"/><path d="M859 146.500h10.500l-2 6h-11z" fill="#c0c0c0"/>
<rect x="825" y="353.500" width="13.500" height="14" fill="#e8e8e8"/><path d="M828.500 356.500h7v8h-4.500l-2.500-2.500z" fill="#333"/><path d="M828.500 362l2.500 2.500v-2.500z" fill="#e8e8e8"/>
<path d="M973 120h6M973 122.5h6M973 125h6" stroke="#292929" stroke-width="1"/>
<path d="M973 151h6M973 153.5h6M973 156h6" stroke="#292929" stroke-width="1"/>
<path d="M973 186.5h6M973 189h6M973 191.5h6" stroke="#292929" stroke-width="1"/>
<path d="M973 222h6M973 224.5h6M973 227h6" stroke="#292929" stroke-width="1"/>
<path d="M973 257.5h6M973 260h6M973 262.5h6" stroke="#292929" stroke-width="1"/>
<path d="M973 293h6M973 295.5h6M973 298h6" stroke="#292929" stroke-width="1"/>
<path d="M973 364h6M973 366.5h6M973 369h6" stroke="#292929" stroke-width="1"/>
<path d="M973 328.500h6M973 331h6M973 333.500h6" stroke="#3a435c" stroke-width="1"/>
</svg>

<!-- dock -->
<div style="left:990.500px;top:18px;width:2.500px;height:558px;background:#272727"></div>
<div style="left:993px;top:18px;width:31px;height:558px;background:#2d2d2d"></div>
<div style="left:993.500px;top:19px;width:30.500px;height:31px;background:#3c3c3c"></div>
<div style="left:993.500px;top:55px;width:30.500px;height:32px;background:#3c3c3c"></div>
<div style="left:996.500px;top:94.500px;width:26px;height:24.500px;background:#434343"></div>
<div style="left:993.500px;top:128px;width:30.500px;height:30px;background:#3c3c3c"></div>
<div style="left:993.500px;top:163.500px;width:30.500px;height:31px;background:#3c3c3c"></div>
<div style="left:993.500px;top:200px;width:30.500px;height:30.500px;background:#3c3c3c"></div>
<svg style="left:0;top:0" width="1024" height="260" viewBox="0 0 1024 260">
<g class="ic" style="stroke:#7e7e7e;stroke-width:1.300">
<circle cx="1009" cy="34.500" r="6.500"/><path d="M1007 32.500 1014 39.500M1006.500 36v-4h4"/>
<path d="M1001.500 77.500v-13h5l1.500 2h8.500v11z"/><path d="M1009 68.500v5M1006.500 71.500l2.500 2.500 2.500-2.500M1004 77.500v-2h10v2"/>
</g>
<g class="ic" style="stroke:#c4c4c4;stroke-width:1.100"><path d="M1009 100l6 3-6 3-6-3z"/><path d="M1003 106l6 3 6-3M1003 109l6 3 6-3"/></g>
<g class="ic" style="stroke:#5a5a5a;stroke-width:1.300"><rect x="1003" y="140" width="12" height="10"/><path d="M1003 139l11-3M1007.500 143v4l3.500-2z"/>
<path d="M1009 173l5 2.500v6l-5 2.500-5-2.500v-6z"/><path d="M1004 175.500l5 2.500 5-2.500M1009 178v6"/><path d="M1012 184h4v-3"/>
<path d="M1004 209l9-2 2 2v9l-9 2-2-2z" fill="#4a4a4a"/></g>
</svg>

<!-- overlay -->
<div style="left:41px;top:65px;width:59.500px;height:16.500px;background:#404040;box-shadow:0 4px 7px rgba(0,0,0,.55),0 1px 2px rgba(0,0,0,.4)"></div>
<div class="t" style="left:45.500px;top:68px;font-size:11px;color:#d6d6d6;letter-spacing:0;-webkit-text-stroke:.45px currentColor">Sketch(P)</div>
<div id="wm" style="left:437px;top:536px;font-family:'DejaVu Sans',sans-serif;font-size:23px;line-height:1;white-space:nowrap;color:#b2acd6;-webkit-text-stroke:1.200px #b2acd6;opacity:.7;letter-spacing:0;transform-origin:0 0;transform:scaleX(.93)">@kevinfm<i style="font-style:normal;position:relative;top:-4px">_</i>art</div>

</div>
</body></html>
